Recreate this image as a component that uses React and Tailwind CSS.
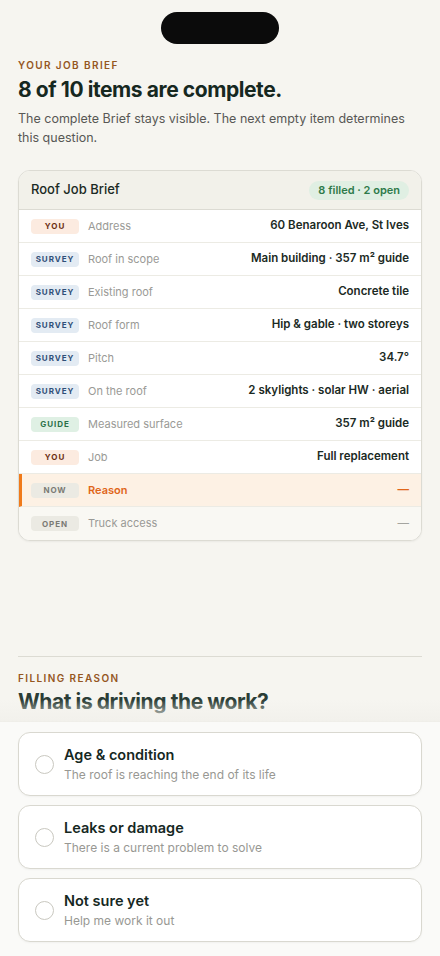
const rows = [
  { tag: "YOU", label: "Address", value: "60 Benaroon Ave, St Ives", kind: "you" },
  { tag: "SURVEY", label: "Roof in scope", value: "Main building · 357 m² guide", kind: "survey" },
  { tag: "SURVEY", label: "Existing roof", value: "Concrete tile", kind: "survey" },
  { tag: "SURVEY", label: "Roof form", value: "Hip & gable · two storeys", kind: "survey" },
  { tag: "SURVEY", label: "Pitch", value: "34.7°", kind: "survey" },
  { tag: "SURVEY", label: "On the roof", value: "2 skylights · solar HW · aerial", kind: "survey" },
  { tag: "GUIDE", label: "Measured surface", value: "357 m² guide", kind: "guide" },
  { tag: "YOU", label: "Job", value: "Full replacement", kind: "you" },
  { tag: "NOW", label: "Reason", value: "—", kind: "now" },
  { tag: "OPEN", label: "Truck access", value: "—", kind: "open" },
];

const tagStyles = {
  you: "bg-[#fcebe0] text-[#6b2e12]",
  survey: "bg-[#e3ebf3] text-[#2f4f78]",
  guide: "bg-[#dff0e4] text-[#2b7048]",
  now: "bg-[#ebeae3] text-[#7a7a74]",
  open: "bg-[#ebeae3] text-[#7a7a74]",
};

const options = [
  { title: "Age & condition", sub: "The roof is reaching the end of its life" },
  { title: "Leaks or damage", sub: "There is a current problem to solve" },
  { title: "Not sure yet", sub: "Help me work it out" },
];

function BriefRow({ row, last }) {
  const isNow = row.kind === "now";
  const isOpen = row.kind === "open";
  let bg = "bg-white pl-3";
  if (isNow) bg = "bg-[#fdf1e4] border-l-[3px] border-l-[#f07a1a] pl-[9px]";
  else if (isOpen) bg = "bg-[#f9f8f3] pl-3";

  return (
    <div
      className={`flex items-center h-[33px] pr-3 ${bg} ${last ? "" : "border-b border-[#ecebe4]"}`}
    >
      <span
        className={`w-12 h-[15px] rounded-[4px] flex items-center justify-center text-[8px] font-bold tracking-[0.12em] ${tagStyles[row.kind]}`}
      >
        {row.tag}
      </span>
      <span
        className={`ml-[9px] text-[11px] ${
          isNow ? "text-[#e0661a] font-semibold" : "text-[#9a9a96]"
        }`}
      >
        {row.label}
      </span>
      <span
        className={`ml-auto text-[11.5px] ${
          isNow
            ? "text-[#e0661a] font-semibold"
            : isOpen
            ? "text-[#a5a5a0]"
            : "text-[#1b2a24] font-semibold"
        }`}
      >
        {row.value}
      </span>
    </div>
  );
}

export default function App() {
  return (
    <div
      className="w-[440px] h-[956px] bg-[#f6f5f0] flex flex-col overflow-hidden"
      style={{ fontFamily: "Inter, 'Noto Sans', sans-serif" }}
    >
      <div className="flex justify-center pt-3">
        <div className="w-[118px] h-8 rounded-full bg-[#0b0b0b]" />
      </div>

      <div className="px-[18px] pt-[14px]">
        <p className="text-[10px] font-semibold tracking-[0.14em] text-[#95571f]">
          YOUR JOB BRIEF
        </p>
        <h1 className="mt-[4px] text-[21px] leading-[26px] font-bold tracking-[-0.02em] text-[#16281f]">
          8 of 10 items are complete.
        </h1>
        <p className="mt-[6px] text-[12.5px] leading-[19px] text-[#585855]">
          The complete Brief stays visible. The next empty item determines this question.
        </p>

        <div className="mt-[23px] rounded-xl border border-[#dcdbd3] overflow-hidden bg-white shadow-[0_1px_2px_rgba(0,0,0,0.05)]">
          <div className="h-[39px] flex items-center justify-between px-3 bg-[#f2f1ea] border-b border-[#dcdbd3]">
            <span className="text-[13px] font-medium text-[#1b2a24]">Roof Job Brief</span>
            <span className="h-[19px] px-[9px] rounded-full bg-[#e0efe3] text-[#2e7a4a] text-[11px] font-semibold flex items-center">
              8 filled · 2 open
            </span>
          </div>
          {rows.map((row, i) => (
            <BriefRow key={row.label} row={row} last={i === rows.length - 1} />
          ))}
        </div>
      </div>

      <div className="flex-1" />

      <div className="px-[18px]">
        <div className="border-t border-[#dcdbd3]" />
        <p className="mt-[14px] text-[10px] font-semibold tracking-[0.14em] text-[#95571f]">
          FILLING REASON
        </p>
        <h2 className="mt-[3px] text-[21px] leading-[26px] font-bold tracking-[-0.02em] text-[#2b3d36]">
          What is driving the work?
        </h2>
      </div>

      <div className="relative mt-[6px] bg-[#fafaf8] border-t border-[#e4e3dc] px-[18px] pt-[10px] pb-[14px] flex flex-col gap-[9px]">
        <div className="absolute left-0 right-0 -top-[22px] h-[22px] bg-gradient-to-b from-[#f6f5f0]/0 to-[#f1f0eb]/90 pointer-events-none" />
        {options.map((o) => (
          <div
            key={o.title}
            className="h-[64px] rounded-xl border border-[#d9d8d0] bg-white flex items-center pl-4 pr-4 shadow-[0_1px_2px_rgba(0,0,0,0.04)]"
          >
            <span className="w-[19px] h-[19px] rounded-full border border-[#c9c8c0] bg-white shrink-0" />
            <div className="ml-[10px]">
              <p className="text-[14.5px] leading-[18px] font-semibold text-[#16281f]">{o.title}</p>
              <p className="mt-[3px] text-[12px] leading-[15px] text-[#989893]">{o.sub}</p>
            </div>
          </div>
        ))}
      </div>
    </div>
  );
}
